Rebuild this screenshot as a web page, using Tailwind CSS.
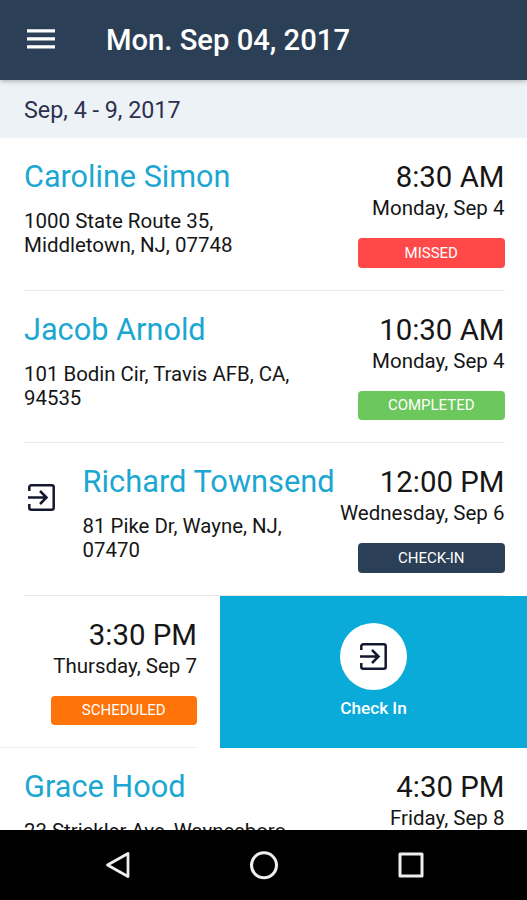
<!DOCTYPE html>
<html lang="en">
  <head>
    <meta charset="UTF-8" />
    <meta name="viewport" content="width=device-width, initial-scale=1.0" />
    <title>Schedule</title>
    <script src="https://cdn.jsdelivr.net/npm/@tailwindcss/browser@4"></script>
  </head>
  <body class="h-[900px] overflow-hidden bg-white font-['Roboto',sans-serif] text-[#161616]">
    <div class="flex h-full w-[527px] flex-col overflow-hidden">
      <!-- App bar -->
      <header class="relative z-10 flex h-[79.5px] shrink-0 items-center bg-[#2b4056] pl-[27px] shadow-[0_1px_5px_rgba(0,0,0,0.3)]">
        <svg class="-mt-0.5 h-5 w-7 text-white" viewBox="0 0 28 20" fill="currentColor">
          <path d="M0 0.3h28v3.3H0zM0 8.3h28v3.3H0zM0 16.3h28v3.3H0z" />
        </svg>
        <h1 class="ml-[51px] text-[29.2px] leading-9 font-medium text-white">Mon. Sep 04, 2017</h1>
      </header>

      <!-- Week range -->
      <div class="flex h-[58.5px] shrink-0 items-center bg-[#edf2f6] pl-6 pt-[3px] text-[23.3px] text-[#2d3150]">Sep, 4 - 9, 2017</div>

      <!-- Appointments -->
      <main class="min-h-0 flex-1 overflow-hidden">
        <section class="mr-[22.5px] ml-6 flex h-[152.5px] justify-between border-b border-[#e9e9e9] pt-[21px]">
          <div>
            <h2 class="text-[30.6px] leading-9 text-[#1ba7d1]">Caroline Simon</h2>
            <p class="mt-3.5 text-[20.5px] leading-6">1000 State Route 35,<br />Middletown, NJ, 07748</p>
          </div>
          <div class="flex flex-col items-end">
            <p class="text-[29.4px] leading-9">8:30 AM</p>
            <p class="mt-px text-[20.5px] leading-6">Monday, Sep 4</p>
            <span class="mt-[18px] flex h-[29.5px] w-[146.5px] items-center justify-center rounded bg-[#ff4848] pt-px text-[15px] text-white">MISSED</span>
          </div>
        </section>

        <section class="mr-[22.5px] ml-6 flex h-[152.5px] justify-between border-b border-[#e9e9e9] pt-[21px]">
          <div>
            <h2 class="text-[30.7px] leading-9 text-[#1ba7d1]">Jacob Arnold</h2>
            <p class="mt-3.5 text-[20.4px] leading-6">101 Bodin Cir, Travis AFB, CA,<br />94535</p>
          </div>
          <div class="flex flex-col items-end">
            <p class="text-[29.4px] leading-9">10:30 AM</p>
            <p class="mt-px text-[20.5px] leading-6">Monday, Sep 4</p>
            <span class="mt-[18px] flex h-[29.5px] w-[146.5px] items-center justify-center rounded bg-[#6cc75c] text-[15px] text-white">COMPLETED</span>
          </div>
        </section>

        <section class="mr-[22.5px] ml-6 flex h-[152.5px] border-b border-[#e9e9e9] pt-[21px]">
          <svg class="mt-5 ml-1 size-[27px] shrink-0 text-[#14182f]" viewBox="0 0 27 27" fill="none" stroke="currentColor" stroke-width="2.5">
            <path d="M1.3 7V3.3a2 2 0 0 1 2-2h20.4a2 2 0 0 1 2 2v20.4a2 2 0 0 1-2 2H3.3a2 2 0 0 1-2-2V20" />
            <path d="M0 13.5h18M12 7l6.5 6.5L12 20" />
          </svg>
          <div class="ml-[27.6px]">
            <h2 class="text-[30.8px] leading-9 whitespace-nowrap text-[#1ba7d1]">Richard Townsend</h2>
            <p class="mt-3.5 text-[20.4px] leading-6">81 Pike Dr, Wayne, NJ,<br />07470</p>
          </div>
          <!-- The date line runs in under the end of the name -->
          <div class="-ml-4 flex flex-1 flex-col items-end whitespace-nowrap">
            <p class="text-[29.4px] leading-9">12:00 PM</p>
            <p class="mt-px text-[20.5px] leading-6">Wednesday, Sep 6</p>
            <span class="mt-[18px] flex h-[29.5px] w-[146.5px] items-center justify-center rounded bg-[#2b4056] pt-px text-[15px] text-white">CHECK-IN</span>
          </div>
        </section>

        <!-- Row swiped open -->
        <section class="flex h-[152.5px]">
          <div class="mr-[23px] flex w-[197px] flex-col items-end border-b border-[#f0f0f0] pt-[21px]">
            <p class="text-[29.4px] leading-9">3:30 PM</p>
            <p class="mt-px text-[20.5px] leading-6">Thursday, Sep 7</p>
            <span class="mt-[18px] flex h-[29.5px] w-[146.5px] items-center justify-center rounded bg-[#ff740a] text-[15px] text-white">SCHEDULED</span>
          </div>
          <div class="flex flex-1 flex-col items-center bg-[#0aabd9] pt-[27.5px]">
            <div class="flex size-[67px] items-center justify-center rounded-full bg-white">
              <svg class="size-[27px] text-[#14182f]" viewBox="0 0 27 27" fill="none" stroke="currentColor" stroke-width="2.5">
                <path d="M1.3 7V3.3a2 2 0 0 1 2-2h20.4a2 2 0 0 1 2 2v20.4a2 2 0 0 1-2 2H3.3a2 2 0 0 1-2-2V20" />
                <path d="M0 13.5h18M12 7l6.5 6.5L12 20" />
              </svg>
            </div>
            <p class="mt-1.5 text-[17.2px] leading-6 font-medium text-white">Check In</p>
          </div>
        </section>

        <section class="mr-[22.5px] ml-6 flex h-[152.5px] justify-between pt-[21px]">
          <div>
            <h2 class="text-[30.7px] leading-9 text-[#1ba7d1]">Grace Hood</h2>
            <p class="mt-3.5 text-[20.4px] leading-6">23 Strickler Ave, Waynesboro</p>
          </div>
          <div class="flex flex-col items-end">
            <p class="text-[29.4px] leading-9">4:30 PM</p>
            <p class="mt-px text-[20.5px] leading-6">Friday, Sep 8</p>
          </div>
        </section>
      </main>

      <!-- System navigation -->
      <nav class="flex h-[70px] shrink-0 items-center justify-between bg-black pr-[100.5px] pl-[102px] text-[#eeeeee]">
        <svg class="size-8" viewBox="0 0 32 32" fill="none" stroke="currentColor" stroke-width="2.8" stroke-linejoin="round">
          <path d="M26 4.5v23L5.5 16z" />
        </svg>
        <svg class="size-8" viewBox="0 0 32 32" fill="none" stroke="currentColor" stroke-width="3">
          <circle cx="16" cy="16.3" r="12.5" />
        </svg>
        <svg class="size-8" viewBox="0 0 32 32" fill="none" stroke="currentColor" stroke-width="3" stroke-linejoin="round">
          <path d="M5 5h22v22H5z" />
        </svg>
      </nav>
    </div>
  </body>
</html>
